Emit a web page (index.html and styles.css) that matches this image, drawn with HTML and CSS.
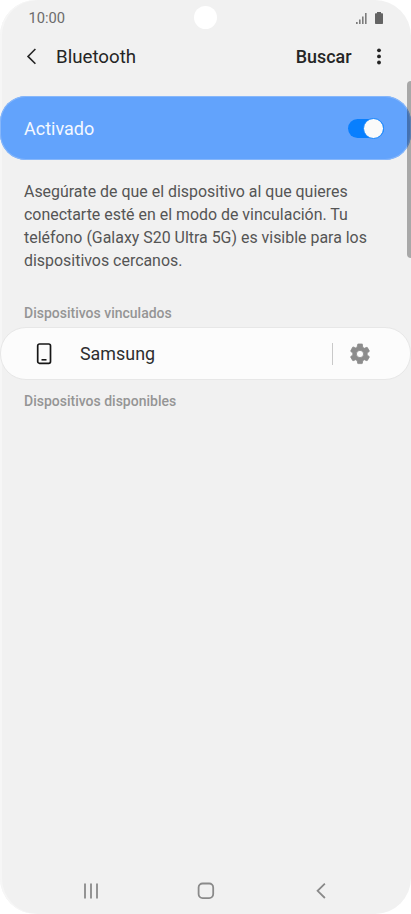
FILE: index.html
```
<!DOCTYPE html>
<html lang="es">
<head>
<meta charset="utf-8">
<title>Bluetooth</title>
<link rel="stylesheet" href="styles.css">
</head>
<body>
<div class="screen">
  <div class="status">
    <span class="clock">10:00</span>
    <span class="camera"></span>
    <svg class="status-icons" width="30" height="14" viewBox="0 0 30 14">
      <path d="M1 11h1.7v2H1zM4 8.5h1.6V13H4zM7 5.5h1.6V13H7zM10 2h1.6v11H10z" fill="#7d7d7d"/>
      <path d="M22 1h4v1.3h1.3q.7 0 .7.7v9.3q0 .7-.7.7h-6.6q-.7 0-.7-.7V3q0-.7.7-.7H22z" fill="#646464"/>
    </svg>
  </div>
  <header class="header">
    <svg class="back" width="12" height="18" viewBox="0 0 12 18"><path d="M9.4 1 2 8.4l7.4 7.3" fill="none" stroke="#252525" stroke-width="1.6"/></svg>
    <h1 class="title">Bluetooth</h1>
    <span class="scan">Buscar</span>
    <svg class="more" width="6" height="18" viewBox="0 0 6 18" fill="#252525"><circle cx="3" cy="2.3" r="1.9"/><circle cx="3" cy="8.4" r="1.9"/><circle cx="3" cy="14.5" r="1.9"/></svg>
  </header>
  <div class="switch-bar">
    <span class="switch-label">Activado</span>
    <span class="toggle"><span class="knob"></span></span>
  </div>
  <p class="help">Asegúrate de que el dispositivo al que quieres<br>conectarte esté en el modo de vinculación. Tu<br>teléfono (Galaxy S20 Ultra 5G) es visible para los<br>dispositivos cercanos.</p>
  <h2 class="section paired">Dispositivos vinculados</h2>
  <div class="device">
    <svg class="phone" width="16" height="22" viewBox="0 0 16 22" fill="none" stroke="#161616"><rect x="1.7" y="1" width="12.8" height="19.3" rx="1.8" stroke-width="1.7"/><path d="M5.5 16.8h5" stroke-width="1.6"/></svg>
    <span class="device-name">Samsung</span>
    <span class="divider"></span>
    <svg class="gear" width="24" height="24" viewBox="0 0 24 24"><path fill="#8c8c8c" stroke="#8c8c8c" stroke-width=".8" stroke-linejoin="round" d="M19.14 12.94c.04-.3.06-.61.06-.94s-.02-.64-.07-.94l2.03-1.58a.49.49 0 0 0 .12-.61l-1.92-3.32a.49.49 0 0 0-.59-.22l-2.39.96a7 7 0 0 0-1.62-.94l-.36-2.54A.48.48 0 0 0 13.92 2h-3.84a.48.48 0 0 0-.47.41l-.36 2.54a7.1 7.1 0 0 0-1.62.94l-2.39-.96a.48.48 0 0 0-.59.22L2.74 8.87a.48.48 0 0 0 .12.61l2.03 1.58c-.05.3-.09.63-.09.94s.02.64.07.94l-2.03 1.58a.49.49 0 0 0-.12.61l1.92 3.32c.12.22.37.29.59.22l2.39-.96c.5.38 1.03.7 1.62.94l.36 2.54c.05.24.24.41.48.41h3.84c.24 0 .44-.17.47-.41l.36-2.54a7 7 0 0 0 1.62-.94l2.39.96c.22.08.47 0 .59-.22l1.92-3.32a.48.48 0 0 0-.12-.61zM12 15.6a3.6 3.6 0 1 1 0-7.2 3.6 3.6 0 0 1 0 7.2z"/></svg>
  </div>
  <h2 class="section available">Dispositivos disponibles</h2>
  <nav class="nav">
    <svg width="18" height="18" viewBox="0 0 18 18"><path d="M3 1.5v15M9 1.5v15M15 1.5v15" stroke="#8a8a8a" stroke-width="1.8"/></svg>
    <svg width="18" height="18" viewBox="0 0 18 18"><rect x="1.6" y="1.5" width="14.6" height="14.6" rx="4" fill="none" stroke="#8a8a8a" stroke-width="1.8"/></svg>
    <svg width="18" height="18" viewBox="0 0 18 18"><path d="M12.9 1.6 5.6 8.8l7.3 7.2" fill="none" stroke="#8a8a8a" stroke-width="1.8"/></svg>
  </nav>
  <span class="scrollbar"></span>
</div>
</body>
</html>
```
FILE: styles.css
```
* { box-sizing: border-box; }
body { margin: 0; background: #fff; font-family: Roboto, sans-serif; }
svg { display: block; flex: none; }
.screen {
  position: relative;
  display: flex;
  flex-direction: column;
  width: 411px;
  height: 914px;
  overflow: hidden;
  border-radius: 36px;
  background: #f1f1f1;
  box-shadow: inset 2px 0 #f6f6f6;
  white-space: nowrap;
}
.status {
  display: grid;
  grid-template-columns: 1fr 23px 1fr;
  align-items: center;
  height: 35px;
  padding: 0 26px 0 28.5px;
}
.clock { color: #6b6b6b; font-size: 14.7px; line-height: 18px; padding-top: 1px; }
.camera { width: 23px; height: 23px; border-radius: 50%; background: #fff; margin-left: -1px; }
.status-icons { justify-self: end; }
.header { display: flex; align-items: center; height: 44px; padding: 0 29px 0 25px; }
.back { margin-left: 1px; }
.title { margin: 0 auto 0 18px; color: #252525; font-size: 18.7px; font-weight: 400; line-height: 24px; }
.scan { color: #252525; font-size: 17.9px; font-weight: 500; line-height: 24px; }
.more { margin-left: 24.5px; }
.switch-bar {
  display: flex;
  align-items: center;
  justify-content: space-between;
  height: 64px;
  margin-top: 17px;
  padding: 0 27px 0 24px;
  border-radius: 26px;
  background: #62a3fc;
  box-shadow: inset 0 0 0 1px #87b7fa;
}
.switch-label { padding-top: 2px; color: #f4f8ff; font-size: 18px; line-height: 24px; }
.toggle { display: flex; justify-content: flex-end; align-items: center; width: 36px; height: 19px; border-radius: 10px; background: #087ffe; }
.knob { width: 21px; height: 21px; flex: none; border-radius: 50%; background: #fafafa; border: 1px solid #1686fc; }
.help { margin: 21px 24px 0; color: #555; font-size: 15.93px; line-height: 22.9px; }
.section { margin: 0 24px; color: #959595; font-size: 14px; font-weight: 500; line-height: 18px; }
.paired { margin-top: 31.4px; }
.device {
  display: flex;
  align-items: center;
  height: 53px;
  margin-top: 5px;
  padding: 0 38px 0 35px;
  border: 1px solid #e7e7e7;
  border-radius: 26px;
  background: #fcfcfc;
}
.device-name { margin: 0 auto 0 28px; color: #2e2e2e; font-size: 17.9px; line-height: 24px; }
.divider { width: 1px; height: 22px; background: #c9c9c9; }
.gear { margin-left: 15px; }
.available { margin-top: 12px; }
.nav { display: flex; justify-content: space-between; margin: auto 81px 14px 82px; }
.scrollbar { position: absolute; top: 81px; right: 0; width: 4px; height: 177px; border-radius: 4px 0 0 4px; background: rgba(0, 0, 0, .3); }
```
